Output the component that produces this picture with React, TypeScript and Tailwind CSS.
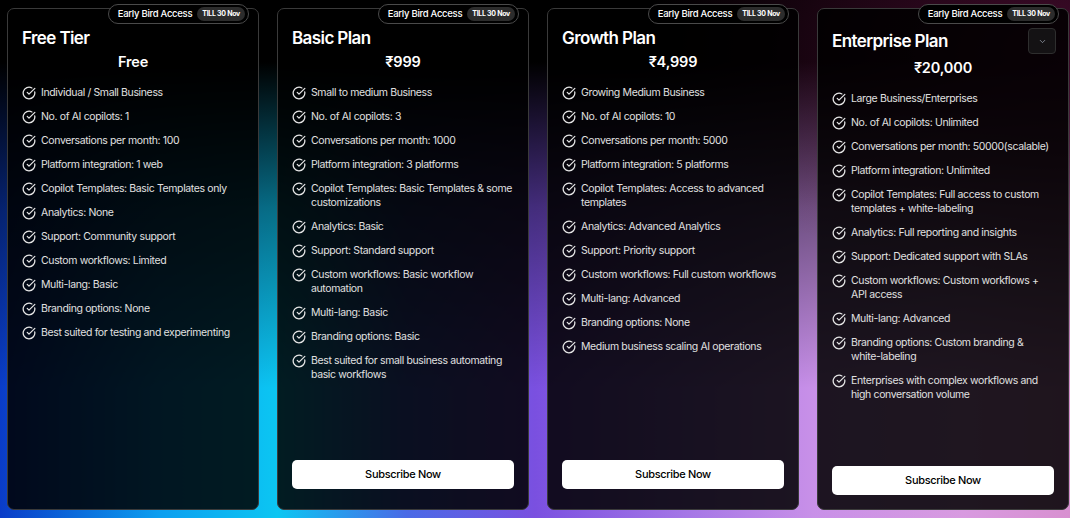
import { CircleCheckBig, ChevronDown } from 'lucide-react';

type Plan = {
  name: string;
  price: string;
  features: string[];
  subscribe: boolean;
  menu?: boolean;
};

const plans: Plan[] = [
  {
    name: 'Free Tier',
    price: 'Free',
    subscribe: false,
    features: [
      'Individual / Small Business',
      'No. of AI copilots: 1',
      'Conversations per month: 100',
      'Platform integration: 1 web',
      'Copilot Templates: Basic Templates only',
      'Analytics: None',
      'Support: Community support',
      'Custom workflows: Limited',
      'Multi-lang: Basic',
      'Branding options: None',
      'Best suited for testing and experimenting',
    ],
  },
  {
    name: 'Basic Plan',
    price: '₹999',
    subscribe: true,
    features: [
      'Small to medium Business',
      'No. of AI copilots: 3',
      'Conversations per month: 1000',
      'Platform integration: 3 platforms',
      'Copilot Templates: Basic Templates & some customizations',
      'Analytics: Basic',
      'Support: Standard support',
      'Custom workflows: Basic workflow automation',
      'Multi-lang: Basic',
      'Branding options: Basic',
      'Best suited for small business automating basic workflows',
    ],
  },
  {
    name: 'Growth Plan',
    price: '₹4,999',
    subscribe: true,
    features: [
      'Growing Medium Business',
      'No. of AI copilots: 10',
      'Conversations per month: 5000',
      'Platform integration: 5 platforms',
      'Copilot Templates: Access to advanced templates',
      'Analytics: Advanced Analytics',
      'Support: Priority support',
      'Custom workflows: Full custom workflows',
      'Multi-lang: Advanced',
      'Branding options: None',
      'Medium business scaling AI operations',
    ],
  },
  {
    name: 'Enterprise Plan',
    price: '₹20,000',
    subscribe: true,
    menu: true,
    features: [
      'Large Business/Enterprises',
      'No. of AI copilots: Unlimited',
      'Conversations per month: 50000(scalable)',
      'Platform integration: Unlimited',
      'Copilot Templates: Full access to custom templates + white-labeling',
      'Analytics: Full reporting and insights',
      'Support: Dedicated support with SLAs',
      'Custom workflows: Custom workflows + API access',
      'Multi-lang: Advanced',
      'Branding options: Custom branding & white-labeling',
      'Enterprises with complex workflows and high conversation volume',
    ],
  },
];

function EarlyBird() {
  return (
    <div className="absolute -top-[5px] right-[9px] flex h-[20px] items-center gap-[5px] rounded-full border border-[#4a4a4a] bg-black pl-[9px] pr-[3px]">
      <span className="text-[9.5px] font-medium tracking-[-0.03em] text-white">Early Bird Access</span>
      <span className="rounded-full bg-[#2c2c2c] px-[5px] py-[2px] text-[7px] font-bold leading-[10px] tracking-[-0.04em] text-white">
        TILL 30 Nov
      </span>
    </div>
  );
}

function PlanCard({ plan }: { plan: Plan }) {
  return (
    <div
      className={`relative flex flex-col rounded-[7px] border border-[#3a3a3a] bg-black/[0.86] px-[14px] pt-[19px] ${
        plan.menu ? 'pb-[14px]' : 'pb-[20px]'
      }`}
    >
      <EarlyBird />
      <div className="flex items-center justify-between">
        <h2 className="text-[17px] font-semibold leading-[20px] tracking-[-0.035em] text-white">{plan.name}</h2>
        {plan.menu && (
          <button className="mr-[-2px] flex h-[26px] w-[28px] items-center justify-center rounded-[4px] border border-[#2e2e2e] bg-[#141214]">
            <ChevronDown size={9} strokeWidth={2} className="text-gray-400" />
          </button>
        )}
      </div>
      <div className="mt-[4px] text-center text-[14.5px] font-semibold leading-[20px] tracking-[-0.01em] text-white">
        {plan.price}
      </div>
      <ul className="mt-[14px] flex flex-col gap-[10px]">
        {plan.features.map((f) => (
          <li key={f} className="flex items-start gap-[5px]">
            <CircleCheckBig size={14} strokeWidth={2.2} className="shrink-0 text-[#e6e6e6]" />
            <span className="text-[10.5px] leading-[14px] tracking-[-0.035em] text-[#e0e0e0]">{f}</span>
          </li>
        ))}
      </ul>
      {plan.subscribe && (
        <button className="mt-auto h-[29px] w-full rounded-[5px] bg-white text-[11px] font-medium tracking-[-0.03em] text-black">
          Subscribe Now
        </button>
      )}
    </div>
  );
}

export default function App() {
  return (
    <div
      className="h-[518px] w-[1070px] overflow-hidden bg-black bg-[radial-gradient(ellipse_40%_45%_at_100%_10%,rgba(120,20,80,0.55),transparent),linear-gradient(to_bottom,#000_0%,#000_12%,rgba(0,0,0,0.45)_40%,transparent_75%),linear-gradient(to_right,#0a3cc8_0%,#0c9ff0_15%,#0cc6f2_26%,#4a6ae6_38%,#7a50e0_50%,#a476e6_64%,#c890e8_76%,#d89ae0_90%,#d890d0_100%)] pb-[8px] pl-[7px] pr-[1px] pt-[8px] font-['Inter',sans-serif]"
    >
      <div className="grid h-full grid-cols-4 gap-[18px]">
        {plans.map((p) => (
          <PlanCard key={p.name} plan={p} />
        ))}
      </div>
    </div>
  );
}
